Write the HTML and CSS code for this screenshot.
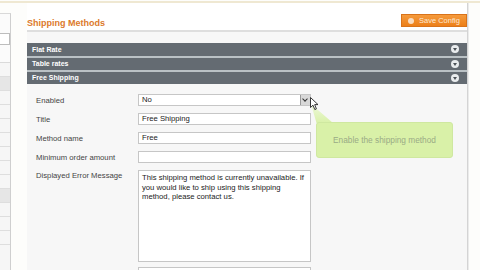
FILE: index.html
```html
<!DOCTYPE html>
<html lang="en">
<head>
  <meta charset="UTF-8" />
  <title>Shipping Methods</title>
  <link rel="stylesheet" href="styles.css">
</head>
<body>
  <div class="topline"></div>
  <div class="page">
    <div class="sidebar">
      <div class="side-top">
        <div class="side-select"></div>
      </div>
      <div class="side-row"></div>
      <div class="side-row active"></div>
      <div class="side-row"></div>
      <div class="side-row"></div>
      <div class="side-row"></div>
      <div class="side-row"></div>
      <div class="side-row"></div>
      <div class="side-row"></div>
      <div class="side-row"></div>
      <div class="side-row active"></div>
      <div class="side-row"></div>
      <div class="side-row"></div>
      <div class="side-row"></div>
    </div>

    <div class="main">
      <div class="head">
        <h3>Shipping Methods</h3>
        <button class="save-btn"><span class="save-icon"></span>Save Config</button>
      </div>

      <div class="sections">
        <div class="section-bar">Flat Rate<span class="toggle"></span></div>
        <div class="section-bar">Table rates<span class="toggle"></span></div>
        <div class="section-bar">Free Shipping<span class="toggle"></span></div>
      </div>

      <div class="fieldset">
        <div class="row">
          <label>Enabled</label>
          <div class="field select">No<span class="select-arrow"></span></div>
        </div>
        <div class="row">
          <label>Title</label>
          <div class="field">Free Shipping</div>
        </div>
        <div class="row">
          <label>Method name</label>
          <div class="field">Free</div>
        </div>
        <div class="row">
          <label>Minimum order amount</label>
          <div class="field"></div>
        </div>
        <div class="row top">
          <label>Displayed Error Message</label>
          <div class="field textarea">This shipping method is currently unavailable. If you would like to ship using this shipping method, please contact us.</div>
        </div>
        <div class="row">
          <label></label>
          <div class="field"></div>
        </div>
      </div>
    </div>

    <div class="gutter"></div>
  </div>

  <!-- hint bubble next to the Enabled field -->
  <div class="hint-tail"></div>
  <div class="hint">Enable the shipping method</div>

  <svg class="cursor" width="9" height="14" viewBox="0 0 9 14">
    <path d="M0.5 0.5 L0.5 10.5 L3 8.2 L4.8 12.6 L6.4 11.9 L4.7 7.6 L8 7.6 Z" fill="#fff" stroke="#222" stroke-width="0.9" stroke-linejoin="round"/>
  </svg>
</body>
</html>
```

FILE: styles.css
```css
body {
  margin: 0;
  width: 480px;
  height: 270px;
  overflow: hidden;
  position: relative;
  background: #fdfdfb;
  font-family: "Liberation Sans", Arial, sans-serif;
  color: #333;
}

.topline {
  height: 2px;
  margin-top: 1px;
  background: #efe8d2;
}

.page {
  display: flex;
  align-items: flex-start;
  height: 267px;
  overflow: hidden;
}

/* left navigation column, mostly cut off */
.sidebar {
  width: 10px;
  margin-top: 10px;
  height: 257px;
  border-top: 1px solid #d9d9d9;
  border-right: 1px solid #cfcfcf;
  background: #f6f6f6;
  overflow: hidden;
}

.side-top {
  height: 49px;
  padding-top: 19px;
  box-sizing: border-box;
  border-bottom: 1px solid #dadada;
  background: #fbfbfb;
}

.side-select {
  height: 10px;
  border: 1px solid #bdbdbd;
  border-left: none;
  background: #fff;
}

.side-row {
  height: 13px;
  border-bottom: 1px solid #dedede;
}

.side-row.active {
  background: #e6e6e6;
}

.main {
  width: 440px;
  margin-left: 16px;
  height: 267px;
  display: flex;
  flex-direction: column;
  background: #f7f7f7;
  overflow: hidden;
}

.head {
  display: flex;
  justify-content: space-between;
  align-items: flex-end;
  height: 29px;
  padding-top: 11px;
  box-sizing: border-box;
  background: #fff;
  border-bottom: 2px solid #dedede;
  margin-left: -2px;
  padding-left: 2px;
}

.head h3 {
  margin: 0 0 2px;
  font-size: 9px;
  font-weight: bold;
  color: #dc7a2c;
}

.save-btn {
  display: flex;
  align-items: center;
  gap: 5px;
  height: 13px;
  width: 66px;
  margin: 0 0 3px;
  padding: 0 0 0 6px;
  border: 1px solid #d9731a;
  background: linear-gradient(#f59a3c, #ec7f18);
  color: #fde8d2;
  font-family: "Liberation Sans", Arial, sans-serif;
  font-size: 7.5px;
  box-sizing: border-box;
}

.save-icon {
  width: 6px;
  height: 6px;
  border-radius: 50%;
  background: #f9dcc0;
}

.sections {
  margin-top: 11px;
  background: #fff;
}

.section-bar {
  position: relative;
  height: 12px;
  line-height: 12px;
  padding-left: 5px;
  background: #646b72;
  border-top: 2px solid #bac1c5;
  color: #fff;
  font-size: 7px;
  font-weight: bold;
}

.section-bar:first-child {
  height: 13px;
  line-height: 13px;
  border-top: none;
}

.toggle {
  position: absolute;
  right: 8px;
  top: 2px;
  width: 8px;
  height: 8px;
  border-radius: 50%;
  background: #e9ecee;
}

.toggle::after {
  content: "";
  position: absolute;
  left: 2px;
  top: 3px;
  border-left: 2px solid transparent;
  border-right: 2px solid transparent;
  border-top: 3px solid #4c5258;
}

.fieldset {
  flex: 1;
  min-height: 0;
  padding: 10px 0 0 9px;
  background: #f7f7f7;
  overflow: hidden;
}

.row {
  display: flex;
  align-items: center;
  margin-bottom: 7px;
}

.row.top {
  align-items: flex-start;
  margin-bottom: 5px;
}

.row.top label {
  padding-top: 1px;
}

.row label {
  width: 102px;
  font-size: 7.7px;
  color: #444;
}

.field {
  width: 173px;
  height: 12px;
  box-sizing: border-box;
  border: 1px solid #c6c6c6;
  background: #fff;
  padding: 0 3px;
  font-size: 7.7px;
  line-height: 10px;
  color: #222;
}

.select {
  position: relative;
}

.select-arrow {
  position: absolute;
  right: 0;
  top: 0;
  width: 10px;
  height: 10px;
  box-sizing: border-box;
  border-left: 1px solid #9a9a9a;
  background: #d8d8d8;
}

.select-arrow::after {
  content: "";
  position: absolute;
  left: 2px;
  top: 2px;
  width: 3px;
  height: 3px;
  border-right: 1.2px solid #333;
  border-bottom: 1.2px solid #333;
  transform: rotate(45deg);
}

.textarea {
  height: 92px;
  padding: 2px 3px;
  line-height: 9.5px;
}

.hint {
  position: absolute;
  left: 316px;
  top: 122px;
  width: 137px;
  height: 36px;
  box-sizing: border-box;
  border: 1px solid #cfe8a0;
  border-radius: 3px;
  background: #d9f1a8;
  color: #9aab86;
  font-size: 8.3px;
  line-height: 34px;
  text-align: center;
}

.hint-tail {
  position: absolute;
  left: 311px;
  top: 104px;
  width: 22px;
  height: 19px;
  background: linear-gradient(#eef8dc, #d9f1a8);
  clip-path: polygon(0 0, 100% 100%, 25% 100%);
}

.cursor {
  position: absolute;
  left: 310px;
  top: 97px;
}

.gutter {
  width: 12px;
  height: 267px;
  border-left: 1px solid #d4d4d4;
  box-shadow: inset 1px 0 0 #ebebeb;
}
```
